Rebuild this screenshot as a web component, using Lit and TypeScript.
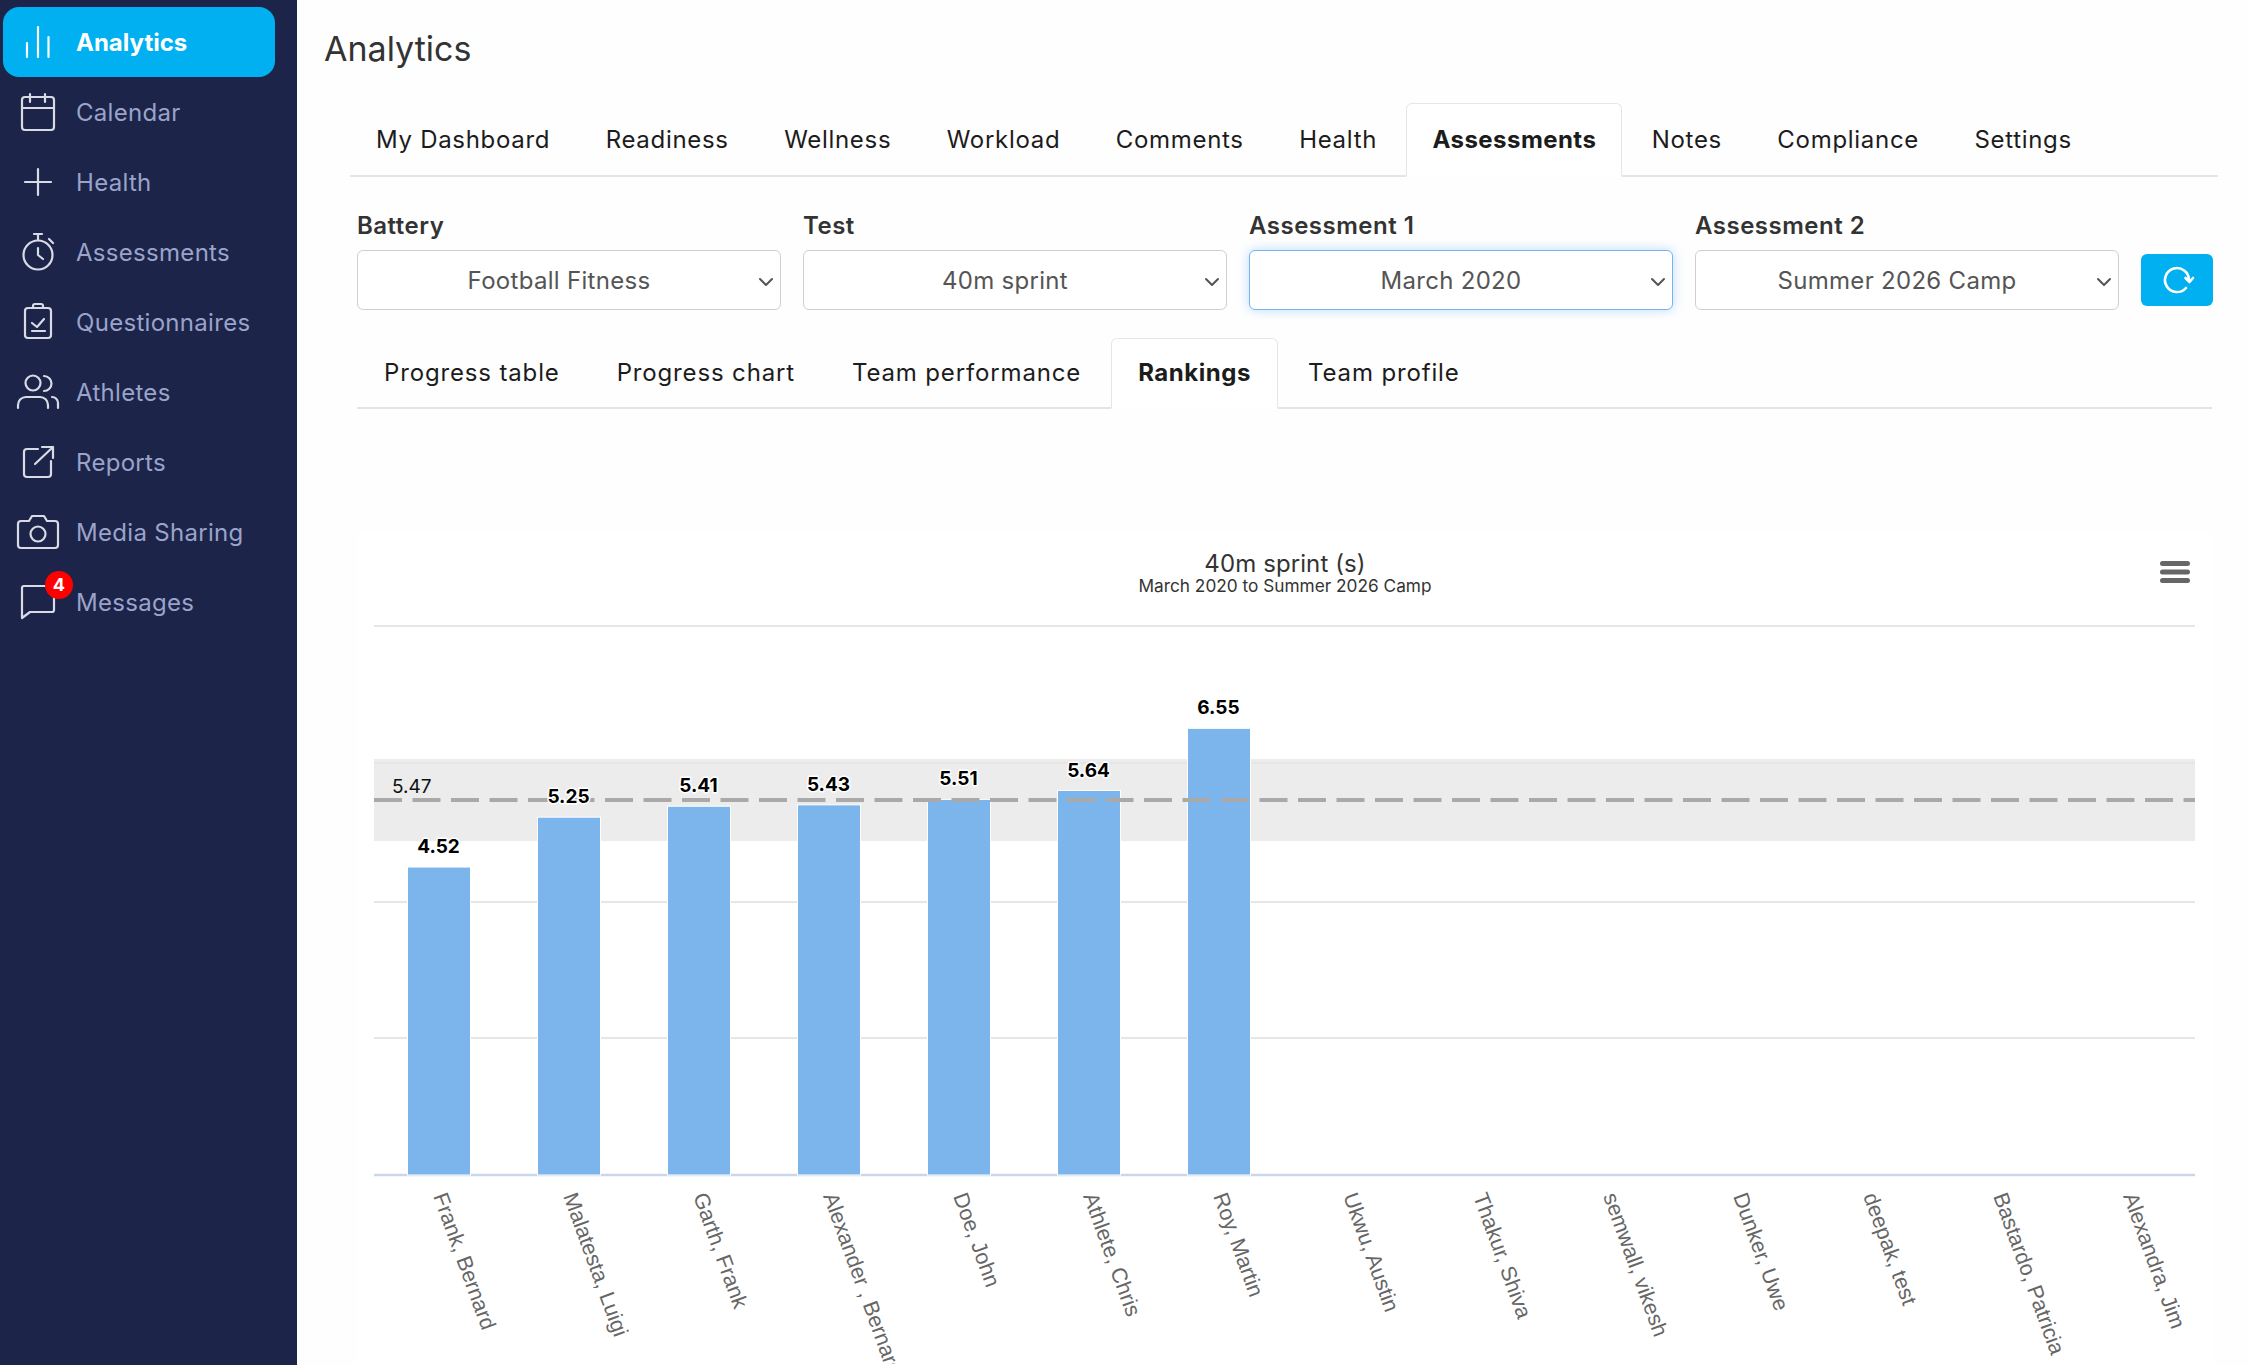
import {LitElement, css, html, svg} from 'lit';
import {customElement} from 'lit/decorators.js';
import {classMap} from 'lit/directives/class-map.js';

const NAV = [
  {label: 'Analytics', active: true, icon: svg`<path d="M11 23v14M22 7v30M32.5 17v20"/>`},
  {label: 'Calendar', icon: svg`<rect x="6" y="7" width="32" height="33" rx="3"/><path d="M6 18h32M14 4v8M29 4v8"/>`},
  {label: 'Health', icon: svg`<path d="M9 22h26M22 9v26"/>`},
  {label: 'Assessments', icon: svg`<circle cx="22" cy="25" r="14.5"/><path d="M18 4h8M22 4v6M22 18v7l5 4M33 9l4 4"/>`},
  {label: 'Questionnaires', icon: svg`<rect x="9" y="8" width="26" height="30" rx="3"/><path d="M17 8V6a2 2 0 0 1 2-2h6a2 2 0 0 1 2 2v2M16 23l5 4 7-8M16 31h13"/>`},
  {label: 'Athletes', icon: svg`<circle cx="17" cy="13" r="7.5"/><path d="M28 6a7.5 7.5 0 0 1 0 15M2 38v-3a8 8 0 0 1 8-8h14a8 8 0 0 1 8 8v3M36 27a6 6 0 0 1 6 6v5"/>`},
  {label: 'Reports', icon: svg`<path d="M22 9H11a3 3 0 0 0-3 3v22a3 3 0 0 0 3 3h21a3 3 0 0 0 3-3V21M19 24 37 7M26 7h11v11"/>`},
  {label: 'Media Sharing', icon: svg`<path d="M5 11h8l3-5h12l3 5h8a3 3 0 0 1 3 3v21a3 3 0 0 1-3 3H5a3 3 0 0 1-3-3V14a3 3 0 0 1 3-3z"/><circle cx="22" cy="24" r="7.5"/>`},
  {label: 'Messages', badge: 4, icon: svg`<path d="M8 6h28a2 2 0 0 1 2 2v22a2 2 0 0 1-2 2H14l-8 6V8a2 2 0 0 1 2-2z"/>`},
];

const MAIN_TABS = ['My Dashboard', 'Readiness', 'Wellness', 'Workload', 'Comments', 'Health', 'Assessments', 'Notes', 'Compliance', 'Settings'];
const SUB_TABS = ['Progress table', 'Progress chart', 'Team performance', 'Rankings', 'Team profile'];

const FILTERS = [
  {label: 'Battery', value: 'Football Fitness'},
  {label: 'Test', value: '40m sprint'},
  {label: 'Assessment 1', value: 'March 2020', focused: true},
  {label: 'Assessment 2', value: 'Summer 2026 Camp'},
];

const ATHLETES: [string, number?][] = [
  ['Frank, Bernard', 4.52],
  ['Malatesta, Luigi', 5.25],
  ['Garth, Frank', 5.41],
  ['Alexander , Bernard', 5.43],
  ['Doe, John', 5.51],
  ['Athlete, Chris', 5.64],
  ['Roy, Martin', 6.55],
  ['Ukwu, Austin'],
  ['Thakur, Shiva'],
  ['semwall, vikesh'],
  ['Dunker, Uwe'],
  ['deepak, test'],
  ['Bastardo, Patricia'],
  ['Alexandra, Jim'],
];

// Chart geometry, in page pixels (the svg's viewBox starts at the page offset).
const BASE_Y = 1177;
const PX_PER_SECOND = 68.35;
const PITCH = 130;
const barCenter = (i: number) => 439 + PITCH * i;

@customElement('app-root')
export class AppRoot extends LitElement {
  static styles = css`
    :host {
      display: flex;
      height: 1365px;
      overflow: hidden;
      background: #fefefe;
      font-family: Inter, "Liberation Sans", sans-serif;
      font-size: 24px;
      color: #212529;
    }

    .sidebar {
      flex: 0 0 297px;
      box-sizing: border-box;
      padding: 7px 22px 0 3px;
      background: #1c2449;
    }

    .nav-item {
      display: flex;
      align-items: center;
      gap: 16px;
      height: 70px;
      padding-left: 13px;
      border-radius: 16px;
      color: #9aa3c9;
      font-size: 24px;
      letter-spacing: .3px;
    }

    .nav-item.active {
      background: #00b0f0;
      color: #fff;
      font-weight: 700;
      letter-spacing: 0;
    }

    .nav-icon {
      position: relative;
      flex: 0 0 44px;
      height: 44px;
    }

    .nav-icon svg {
      display: block;
      fill: none;
      stroke: #d9dbe4;
      stroke-width: 2.2;
      stroke-linecap: round;
      stroke-linejoin: round;
    }

    .active .nav-icon svg {
      stroke: #fff;
    }

    .badge {
      position: absolute;
      top: -9px;
      left: 29px;
      width: 28px;
      height: 28px;
      border-radius: 50%;
      background: #f00;
      color: #fff;
      font-size: 18px;
      font-weight: 700;
      line-height: 28px;
      text-align: center;
    }

    .main {
      flex: 1;
      min-width: 0;
      display: flex;
      flex-direction: column;
      overflow: hidden;
    }

    h1 {
      margin: 0;
      padding: 27px 0 0 27px;
      height: 103px;
      box-sizing: border-box;
      color: #333;
      font-size: 34px;
      font-weight: 400;
      line-height: 44px;
    }

    .tabs {
      display: flex;
      gap: 3.4px;
      border-bottom: 2px solid #e4e4e4;
    }

    .tab {
      margin-bottom: -2px;
      padding: 0 25px;
      border: 1px solid transparent;
      border-bottom-width: 2px;
      border-radius: 6px 6px 0 0;
      color: #1c1c1c;
      font-size: 24px;
      letter-spacing: .7px;
      line-height: 71px;
      white-space: nowrap;
    }

    .tab.active {
      border-color: #e6e6e6 #e6e6e6 #fff;
      background: #fff;
      font-weight: 700;
      letter-spacing: .45px;
    }

    .main-tabs {
      margin: 0 30px 0 53px;
    }

    .filters {
      display: flex;
      align-items: flex-end;
      gap: 22px;
      margin: 34px 36px 0 60px;
    }

    .filter {
      flex: 0 0 424px;
    }

    .filter label {
      display: block;
      margin-bottom: 9px;
      color: #333;
      font-weight: 600;
      letter-spacing: .5px;
      line-height: 30px;
    }

    .select-wrap {
      position: relative;
    }

    select {
      display: block;
      box-sizing: border-box;
      width: 100%;
      height: 60px;
      padding: 0 44px 0 24px;
      border: 1.5px solid #cfcfcf;
      border-radius: 6px;
      outline: none;
      appearance: none;
      background: #fff;
      color: #555;
      font: inherit;
      letter-spacing: .3px;
      text-align: center;
      text-align-last: center;
    }

    select.focused {
      border-color: #73b4f3;
      box-shadow: 0 0 12px rgba(90, 165, 245, .4);
    }

    .chevron {
      position: absolute;
      top: 27px;
      right: 7px;
      fill: none;
      stroke: #555;
      stroke-width: 2;
      stroke-linecap: round;
      stroke-linejoin: round;
    }

    .refresh {
      flex: 0 0 72px;
      display: flex;
      align-items: center;
      justify-content: center;
      height: 52px;
      margin-bottom: 4px;
      padding: 0;
      border: 0;
      border-radius: 6px;
      background: #00b0f0;
    }

    .refresh svg {
      fill: none;
      stroke: #fff;
      stroke-width: 2.6;
      stroke-linecap: round;
      stroke-linejoin: round;
    }

    .sub-tabs {
      gap: 3px;
      margin: 28px 36px 0 60px;
    }

    .sub-tabs .tab {
      padding: 0 26px;
      letter-spacing: .85px;
      line-height: 68px;
    }

    .sub-tabs .tab.active {
      letter-spacing: .55px;
    }

    .chart {
      display: block;
      flex: none;
      margin: 123px 0 0 60px;
      background: #fff;
    }

    .chart-title {
      fill: #333;
      font-size: 24px;
      letter-spacing: .1px;
      text-anchor: middle;
    }

    .chart-sub {
      fill: #333;
      font-size: 17.25px;
      text-anchor: middle;
    }

    .value {
      fill: #000;
      font-size: 19px;
      font-weight: 700;
      text-anchor: middle;
      paint-order: stroke;
      stroke: #fff;
      stroke-width: 3px;
      stroke-linejoin: round;
    }

    .mean {
      fill: #111;
      font-size: 19px;
    }

    .category {
      fill: #666;
      font-family: "Liberation Sans", Arial, sans-serif;
      font-size: 21.6px;
    }
  `;

  renderNav() {
    return NAV.map((item) => html`
      <div class=${classMap({'nav-item': true, active: !!item.active})}>
        <div class="nav-icon">
          <svg width="44" height="44" viewBox="0 0 44 44">${item.icon}</svg>
          ${item.badge ? html`<span class="badge">${item.badge}</span>` : ''}
        </div>
        <span>${item.label}</span>
      </div>
    `);
  }

  renderTabs(tabs: string[], active: string, extraClass: string) {
    return html`
      <div class="tabs ${extraClass}">
        ${tabs.map((t) => html`<div class=${classMap({tab: true, active: t == active})}>${t}</div>`)}
      </div>
    `;
  }

  renderFilters() {
    return html`
      <div class="filters">
        ${FILTERS.map((f) => html`
          <div class="filter">
            <label>${f.label}</label>
            <div class="select-wrap">
              <select class=${classMap({focused: !!f.focused})}>
                <option>${f.value}</option>
              </select>
              <svg class="chevron" width="16" height="10" viewBox="0 0 16 10"><path d="M2 2l6 6 6-6"/></svg>
            </div>
          </div>
        `)}
        <button class="refresh">
          <svg width="36" height="36" viewBox="0 0 36 36">
            <path d="M27 26A12 12 0 1 1 30 18M26.5 16l4 4 3.5-4"/>
          </svg>
        </button>
      </div>
    `;
  }

  renderChart() {
    return html`
      <svg class="chart" width="1855" height="832" viewBox="357 533 1855 832">
        <text class="chart-title" x="1285" y="572.5">40m sprint (s)</text>
        <text class="chart-sub" x="1285" y="593">March 2020 to Summer 2026 Camp</text>

        <path d="M2162.5 564.5h25M2162.5 573h25M2162.5 581.5h25" stroke="#666" stroke-width="5" stroke-linecap="round"/>

        <path d="M374 627H2195M374 764H2195M374 903H2195M374 1039H2195" stroke="#e6e6e6" stroke-width="2"/>
        <rect x="374" y="760" width="1821" height="82" fill="#ececec"/>
        <path d="M374 764H2195" stroke="#e6e6e6" stroke-width="2"/>
        <path d="M374 1176H2195" stroke="#ccd6eb" stroke-width="2.5"/>

        ${ATHLETES.map(([, value], i) => {
          if (value === undefined) return '';
          const top = BASE_Y - value * PX_PER_SECOND;
          return svg`<rect x=${barCenter(i) - 31.5} y=${top} width="63" height=${BASE_Y - top - 1}
              fill="#7cb5ec" stroke="#fff" stroke-width="1"/>`;
        })}

        <path d="M374 801H2195" stroke="#a9a9a9" stroke-width="4" stroke-dasharray="28 10.5"/>
        <text class="mean" x="392" y="794">5.47</text>

        ${ATHLETES.map(([, value], i) => {
          if (value === undefined) return '';
          return svg`<text class="value" x=${barCenter(i) - 0.5} y=${BASE_Y - value * PX_PER_SECOND - 14}>${value.toFixed(2)}</text>`;
        })}

        ${ATHLETES.map(([name], i) => {
          const x = 433 + PITCH * i;
          return svg`<text class="category" x=${x} y="1197" transform="rotate(70 ${x} 1197)">${name}</text>`;
        })}
      </svg>
    `;
  }

  render() {
    return html`
      <nav class="sidebar">${this.renderNav()}</nav>
      <div class="main">
        <h1>Analytics</h1>
        ${this.renderTabs(MAIN_TABS, 'Assessments', 'main-tabs')}
        ${this.renderFilters()}
        ${this.renderTabs(SUB_TABS, 'Rankings', 'sub-tabs')}
        ${this.renderChart()}
      </div>
    `;
  }
}
